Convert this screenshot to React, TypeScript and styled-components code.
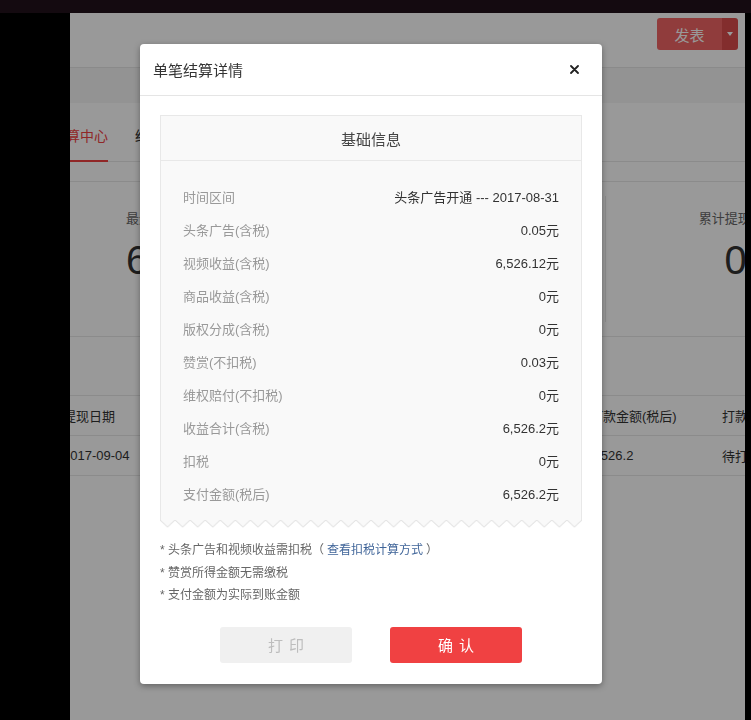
import React from 'react';
import styled, { createGlobalStyle } from 'styled-components';

const GlobalStyle = createGlobalStyle`
  html, body {
    margin: 0;
    padding: 0;
    background: #000;
  }
  body {
    font-family: "Liberation Sans", "Noto Sans CJK SC", sans-serif;
    color: #333;
  }
  * {
    box-sizing: border-box;
  }
`;

const Screen = styled.div`
  width: 751px;
  height: 720px;
  display: flex;
  flex-direction: column;
  overflow: hidden;
`;

const TopStrip = styled.div`
  height: 13px;
  background: #140a10;
`;

const Body = styled.div`
  flex: 1;
  display: flex;
  min-height: 0;
`;

const Rail = styled.div<{ $width: number }>`
  width: ${p => p.$width}px;
  flex-shrink: 0;
  background: #000;
`;

const Main = styled.div`
  position: relative;
  flex: 1;
  overflow: hidden;
  background: #f5f5f5;
`;

const Header = styled.div`
  height: 55px;
  background: #fff;
  border-bottom: 1px solid #e6e6e6;
  display: flex;
  align-items: flex-start;
  justify-content: flex-end;
  padding: 5px 7px 0 0;
`;

const PublishGroup = styled.div`
  display: flex;
  height: 32px;
  border-radius: 3px;
  overflow: hidden;
`;

const PublishButton = styled.button`
  width: 65px;
  border: none;
  background: #f06565;
  color: #fff;
  font-family: inherit;
  font-size: 15px;
  padding: 0;
`;

const PublishCaret = styled.button`
  width: 16px;
  border: none;
  background: #da4c4c;
  padding: 0;
  display: flex;
  align-items: center;
  justify-content: center;

  &::after {
    content: '';
    border-left: 3px solid transparent;
    border-right: 3px solid transparent;
    border-top: 4px solid #fff;
  }
`;

const Band = styled.div`
  height: 35px;
`;

const Card = styled.div`
  background: #fff;
  height: 100%;
  margin-left: -18px;
`;

const TabBar = styled.div`
  height: 59px;
  display: flex;
  gap: 27px;
  border-bottom: 1px solid #e8e8e8;
`;

const Tab = styled.div<{ $active?: boolean }>`
  display: flex;
  align-items: center;
  padding-top: 6px;
  font-size: 14px;
  color: ${p => (p.$active ? '#f04142' : '#333')};
  border-bottom: 2px solid ${p => (p.$active ? '#f04142' : 'transparent')};
  margin-bottom: -1px;
`;

const StatsRow = styled.div`
  margin-top: 19px;
  height: 156px;
  border-top: 1px solid #e8e8e8;
  border-bottom: 1px solid #e8e8e8;
  display: grid;
  grid-template-columns: 553px 260px;
  align-items: start;
`;

const StatCell = styled.div<{ $centered?: boolean; $divider?: boolean }>`
  margin-top: 14px;
  height: 126px;
  padding-top: 14px;
  padding-left: ${p => (p.$centered ? 0 : 74)}px;
  text-align: ${p => (p.$centered ? 'center' : 'left')};
  border-left: ${p => (p.$divider ? '1px solid #e8e8e8' : 'none')};
`;

const StatLabel = styled.div`
  font-size: 13px;
  color: #666;
  line-height: 18px;
`;

const StatValue = styled.div`
  margin-top: 10px;
  font-size: 40px;
  line-height: 44px;
  color: #333;
`;

const Table = styled.div`
  margin-top: 58px;
  padding-left: 11px;
  border-top: 1px solid #e8e8e8;
`;

const TableRow = styled.div`
  height: 40px;
  display: grid;
  grid-template-columns: 140px 130px 130px 127px 132px 1fr;
  align-items: center;
  border-bottom: 1px solid #e8e8e8;
  font-size: 13px;
  color: #333;
  white-space: nowrap;
`;

const Dim = styled.div`
  position: absolute;
  inset: 0;
  background: rgba(0, 0, 0, 0.4);
`;

const Modal = styled.div`
  position: fixed;
  top: 44px;
  left: 140px;
  width: 462px;
  background: #fff;
  border-radius: 4px;
  box-shadow: 0 2px 6px rgba(0, 0, 0, 0.35);
`;

const ModalHeader = styled.div`
  height: 52px;
  padding: 0 23px 0 13px;
  display: flex;
  align-items: center;
  justify-content: space-between;
  border-bottom: 1px solid #e5e5e5;
`;

const ModalTitle = styled.div`
  font-size: 15px;
  color: #333;
  margin-top: -1px;
`;

const CloseButton = styled.button`
  border: none;
  background: none;
  padding: 0;
  display: flex;
  cursor: pointer;
`;

const ModalBody = styled.div`
  padding: 19px 20px 21px;
`;

const Receipt = styled.div`
  background: #f9f9f9;
  border: 1px solid #e8e8e8;
  border-bottom: none;
`;

const ReceiptTitle = styled.div`
  height: 45px;
  display: flex;
  align-items: center;
  justify-content: center;
  font-size: 15px;
  color: #444;
  border-bottom: 1px solid #e8e8e8;
`;

const ReceiptRows = styled.div`
  padding: 19px 22px 10px;
`;

const ReceiptRow = styled.div`
  height: 33px;
  display: flex;
  align-items: center;
  justify-content: space-between;
  font-size: 13px;
`;

const RowLabel = styled.span`
  color: #999;
`;

const RowValue = styled.span`
  color: #333;
`;

const Zigzag = styled.svg`
  display: block;
  width: 100%;
  height: 8px;
`;

const Notes = styled.div`
  margin-top: 11px;
  font-size: 12px;
  line-height: 22.5px;
  color: #666;
`;

const NoteLink = styled.a`
  color: #406599;
  text-decoration: none;
  margin: 0 3px;
`;

const Actions = styled.div`
  margin-top: 20px;
  display: flex;
  justify-content: center;
  gap: 38px;
`;

const ActionButton = styled.button<{ $primary?: boolean }>`
  width: 132px;
  height: 36px;
  border: none;
  border-radius: 3px;
  font-family: inherit;
  font-size: 15px;
  letter-spacing: 6px;
  padding: 0 0 0 6px;
  background: ${p => (p.$primary ? '#f04142' : '#f0f0f0')};
  color: ${p => (p.$primary ? '#fff' : '#bdbdbd')};
`;

const rows: [string, string][] = [
  ['时间区间', '头条广告开通 --- 2017-08-31'],
  ['头条广告(含税)', '0.05元'],
  ['视频收益(含税)', '6,526.12元'],
  ['商品收益(含税)', '0元'],
  ['版权分成(含税)', '0元'],
  ['赞赏(不扣税)', '0.03元'],
  ['维权赔付(不扣税)', '0元'],
  ['收益合计(含税)', '6,526.2元'],
  ['扣税', '0元'],
  ['支付金额(税后)', '6,526.2元'],
];

// torn paper edge under the receipt
const ReceiptEdge: React.FC = () => (
  <Zigzag viewBox="0 0 420 8" preserveAspectRatio="none">
    <defs>
      <pattern id="teeth" width="15" height="8" patternUnits="userSpaceOnUse">
        <path d="M0 0 L7.5 7 L15 0 Z" fill="#f9f9f9" />
        <path d="M0 0 L7.5 7 L15 0" fill="none" stroke="#e4e4e4" strokeWidth="1" />
      </pattern>
    </defs>
    <rect x="0" y="0" width="420" height="8" fill="url(#teeth)" />
  </Zigzag>
);

const App: React.FC = () => {
  return (
    <>
      <GlobalStyle />
      <Screen>
        <TopStrip />
        <Body>
          <Rail $width={70} />
          <Main>
            <Header>
              <PublishGroup>
                <PublishButton>发表</PublishButton>
                <PublishCaret />
              </PublishGroup>
            </Header>
            <Band />
            <Card>
              <TabBar>
                <Tab $active>结算中心</Tab>
                <Tab>结算记录</Tab>
              </TabBar>
              <StatsRow>
                <StatCell>
                  <StatLabel>最近提现金额(元)</StatLabel>
                  <StatValue>6,526.2</StatValue>
                </StatCell>
                <StatCell $centered $divider>
                  <StatLabel>累计提现(元)</StatLabel>
                  <StatValue>0</StatValue>
                </StatCell>
              </StatsRow>
              <Table>
                <TableRow>
                  <div>提现日期</div>
                  <div>结算周期</div>
                  <div>收益金额</div>
                  <div>扣税金额</div>
                  <div>打款金额(税后)</div>
                  <div>打款状态</div>
                </TableRow>
                <TableRow>
                  <div>2017-09-04</div>
                  <div>2017-08</div>
                  <div>6,526.2</div>
                  <div>0</div>
                  <div>6,526.2</div>
                  <div>待打款</div>
                </TableRow>
              </Table>
            </Card>
            <Dim />
          </Main>
          <Rail $width={6} />
        </Body>

        <Modal>
          <ModalHeader>
            <ModalTitle>单笔结算详情</ModalTitle>
            <CloseButton aria-label="关闭">
              <svg width="9" height="9" viewBox="0 0 9 9">
                <path d="M1 1 L8 8 M8 1 L1 8" stroke="#222" strokeWidth="1.8" strokeLinecap="round" />
              </svg>
            </CloseButton>
          </ModalHeader>
          <ModalBody>
            <Receipt>
              <ReceiptTitle>基础信息</ReceiptTitle>
              <ReceiptRows>
                {rows.map(([label, value]) => (
                  <ReceiptRow key={label}>
                    <RowLabel>{label}</RowLabel>
                    <RowValue>{value}</RowValue>
                  </ReceiptRow>
                ))}
              </ReceiptRows>
            </Receipt>
            <ReceiptEdge />
            <Notes>
              <div>
                * 头条广告和视频收益需扣税（<NoteLink href="#">查看扣税计算方式</NoteLink>）
              </div>
              <div>* 赞赏所得金额无需缴税</div>
              <div>* 支付金额为实际到账金额</div>
            </Notes>
            <Actions>
              <ActionButton>打印</ActionButton>
              <ActionButton $primary>确认</ActionButton>
            </Actions>
          </ModalBody>
        </Modal>
      </Screen>
    </>
  );
};

export default App;
